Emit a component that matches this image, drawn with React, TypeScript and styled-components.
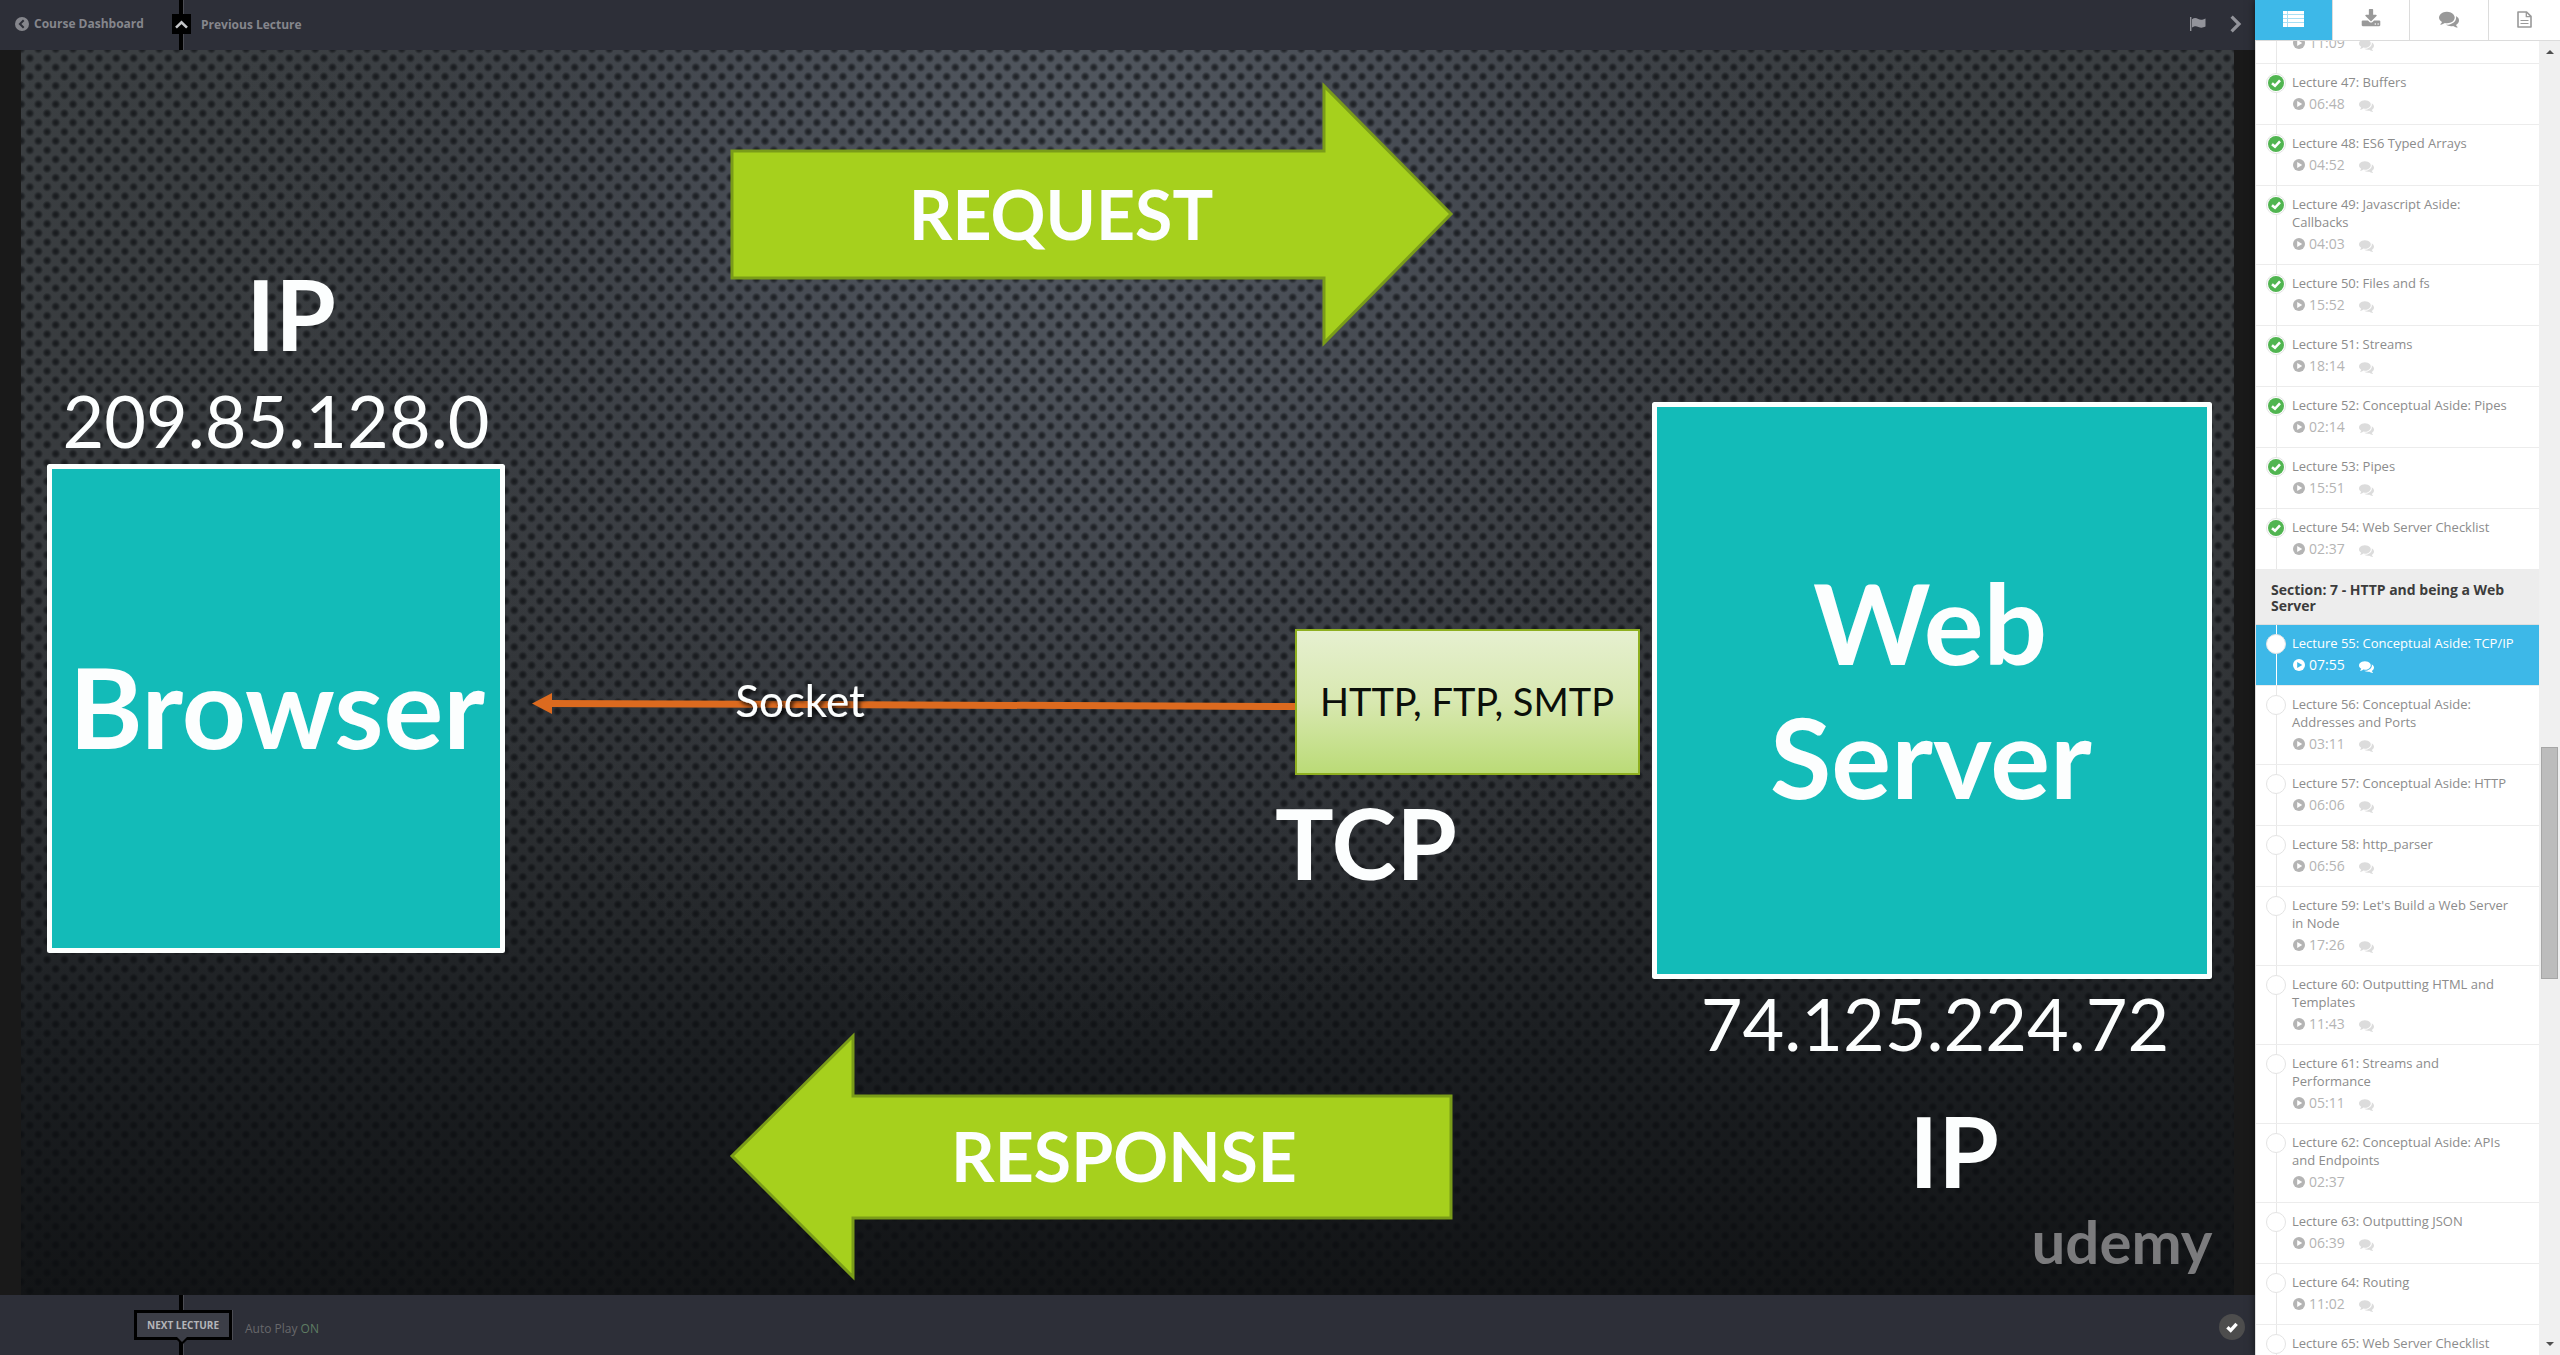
import React, { useLayoutEffect, useRef } from "react";
import styled, { createGlobalStyle, css } from "styled-components";

const GlobalStyle = createGlobalStyle`
  *, *::before, *::after { box-sizing: border-box; }
  body { margin: 0; font-family: "Open Sans", "Noto Sans", sans-serif; }
  button { font: inherit; border: 0; padding: 0; margin: 0; background: none; cursor: pointer; }
  a { text-decoration: none; color: inherit; }
  svg { display: block; }
`;

const BAR = "#2d2f38";
const BLUE = "#3db8e8";

/* ---------- page shell ---------- */

const Page = styled.div`
  display: flex;
  height: 100vh;
  overflow: hidden;
  background: #1a1a1a;
`;

const Player = styled.main`
  flex: 1;
  min-width: 0;
  display: flex;
  flex-direction: column;
`;

const TopBar = styled.header`
  flex: none;
  height: 50px;
  display: flex;
  align-items: center;
  background: ${BAR};
  color: #85868c;
  font-size: 12px;
  font-weight: 700;
  line-height: 16px;
`;

const DashboardLink = styled.a`
  display: flex;
  align-items: center;
  gap: 5px;
  width: 172px;
  padding-left: 15px;
  padding-bottom: 2px;
`;

const rail = css`
  position: relative;
  &::before {
    content: "";
    position: absolute;
    top: 0;
    bottom: 0;
    left: ${(p: { $rail: number }) => p.$rail}px;
    width: 5px;
    background: #000;
    border-right: 1px solid #4b4c53;
  }
`;

const TopRail = styled.div<{ $rail: number }>`
  ${rail}
  align-self: stretch;
  width: 19px;
  padding-top: 14px;
`;

const UpButton = styled.button`
  position: relative;
  display: grid;
  place-items: center;
  width: 19px;
  height: 20px;
  background: #000;
`;

const PreviousLink = styled.a`
  margin-left: 10px;
  flex: 1;
`;

const BarButton = styled.button`
  display: grid;
  place-items: center;
  width: 38px;
  height: 40px;
  color: #92939a;
`;

const TopActions = styled.div`
  display: flex;
  align-items: center;
  height: 100%;
  padding-bottom: 2px;
`;

const Stage = styled.section`
  flex: 1;
  min-height: 0;
  background: #191919;
  & > svg {
    width: 100%;
    height: 100%;
  }
`;

const BottomBar = styled.footer`
  flex: none;
  height: 60px;
  display: flex;
  align-items: center;
  background: ${BAR};
  padding-left: 134px;
  padding-right: 10px;
`;

const BottomRail = styled.div<{ $rail: number }>`
  ${rail}
  align-self: stretch;
  padding-top: 15px;
`;

const NextButton = styled.button`
  position: relative;
  display: block;
  width: 98px;
  height: 30px;
  border: 3px solid #000;
  background: #3c3e47;
  color: #b4b5b9;
  font-size: 10px;
  font-weight: 700;
  line-height: 24px;
  text-align: center;
  box-shadow: 1px 0 0 #4b4c53;
`;

const Notch = styled.svg`
  position: absolute;
  left: 37px;
  top: 24px;
`;

const AutoPlay = styled.button`
  flex: none;
  margin-left: 13px;
  padding-top: 8px;
  color: #68686b;
  font-size: 12px;
  line-height: 16px;
`;

const AutoPlayState = styled.span`
  color: #5e7d63;
`;

const DoneButton = styled.button`
  margin-left: auto;
  margin-top: 4px;
  display: grid;
  place-items: center;
  width: 26px;
  height: 26px;
  border-radius: 50%;
  background: #4d4d4d;
  color: #fff;
`;

/* ---------- sidebar ---------- */

const Sidebar = styled.aside`
  position: relative;
  flex: none;
  width: 305px;
  display: flex;
  flex-direction: column;
  background: #fff;
  border-left: 1px solid #dedede;
  box-shadow: 0 0 8px rgba(0, 0, 0, 0.6);
`;

const Tabs = styled.nav`
  flex: none;
  display: grid;
  grid-template-columns: 77px 77px 79px 1fr;
  height: 41px;
  margin-left: -1px;
  border-bottom: 1px solid #dcdcdc;
`;

const Tab = styled.button<{ $active?: boolean }>`
  display: grid;
  place-items: center;
  padding-bottom: 2px;
  color: ${(p) => (p.$active ? "#fff" : "#999")};
  background: ${(p) => (p.$active ? BLUE : "#fff")};
  & + & {
    border-left: 1px solid #dcdcdc;
  }
`;

const SidebarBody = styled.div`
  flex: 1;
  min-height: 0;
  display: flex;
`;

const Scroller = styled.div`
  flex: 1;
  overflow: hidden;
`;

const List = styled.ul`
  margin: 0;
  padding: 0;
  list-style: none;
`;

const SectionTitle = styled.li`
  padding: 12px 30px 10px 15px;
  background: #ededed;
  border-bottom: 1px solid #dedede;
  color: #3c3c3c;
  font-size: 14px;
  font-weight: 700;
  line-height: 16px;
`;

const Row = styled.li<{ $active?: boolean }>`
  display: grid;
  grid-template-columns: 20px 1fr;
  column-gap: 6px;
  padding: 9px 24px 10px 10px;
  border-bottom: 1px solid #ececec;
  color: ${(p) => (p.$active ? "#fff" : "#8c8c8c")};
  background: linear-gradient(${(p) => (p.$active ? "#fff, #fff" : "#e8e8e8, #e8e8e8")}) 20px 0 / 1px 100% no-repeat
    ${(p) => (p.$active ? BLUE : "#fff")};
  background-clip: ${(p) => (p.$active ? "padding-box" : "border-box")};
`;

const Marker = styled.span`
  display: grid;
  place-items: center;
  width: 20px;
  height: 20px;
  border-radius: 50%;
  border: 1px solid #e4e4e4;
  background: #fff;
`;

const RowLink = styled.a`
  display: block;
  min-width: 0;
`;

const RowTitle = styled.span`
  display: block;
  font-size: 13px;
  line-height: 18px;
`;

const Meta = styled.span<{ $active?: boolean }>`
  display: flex;
  align-items: center;
  margin-top: 3px;
  padding-left: 1px;
  color: ${(p) => (p.$active ? "#fff" : "#b4b4b4")};
  font-size: 14px;
  line-height: 20px;
`;

const Duration = styled.span`
  margin: 0 14px 0 4px;
`;

const Talk = styled.span<{ $active?: boolean }>`
  padding-top: 2px;
  color: ${(p) => (p.$active ? "#fff" : "#dcdcdc")};
`;

const ScrollTrack = styled.div`
  flex: none;
  width: 21px;
  display: grid;
  grid-template-rows: 22px 684fr 232fr 354fr 22px;
  justify-items: center;
  align-items: center;
  background: #f0f0f0;
`;

const Thumb = styled.div`
  grid-row: 3;
  width: 17px;
  height: 100%;
  background: #bcbcbc;
  border: 1px solid #a6a6a6;
`;

const ArrowBox = styled.span<{ $end?: boolean }>`
  grid-row: ${(p) => (p.$end ? 5 : 1)};
`;

/* ---------- icons ---------- */

const Svg = ({ size, d }: { size: number; d: string }) => (
  <svg width={size} height={size} viewBox="0 0 1792 1792" fill="currentColor" aria-hidden="true">
    <path d={d} />
  </svg>
);

const COMMENTS =
  "M1408 768q0 139-94 257t-256.5 186.5-353.5 68.5q-86 0-176-16-124 88-278 128-36 9-86 16h-3q-11 0-20.5-8t-11.5-21q-1-3-1-6.5t.5-6.5 2-6l2.5-5 3.5-5.5 4-5 4.5-5 4-4.5q5-6 23-25t26-29.5 22.5-29 25-38.5 20.5-44q-124-72-195-177t-71-224q0-139 94-257t256.5-186.5 353.5-68.5 353.5 68.5 256.5 186.5 94 257zm384 256q0 120-71 224.5t-195 176.5q10 24 20.5 44t25 38.5 22.5 29 26 29.5 23 25q1 1 4 4.5t4.5 5 4 5 3.5 5.5l2.5 5 2 6 .5 6.5-1 6.5q-3 14-13 22t-22 7q-50-7-86-16-154-40-278-128-90 16-176 16-271 0-472-132 58 4 88 4 161 0 309-45t264-129q125-92 192-212t67-254q0-77-23-152 129 71 204 178t75 230z";
const DOWNLOAD =
  "M1344 1344q0-26-19-45t-45-19-45 19-19 45 19 45 45 19 45-19 19-45zm256 0q0-26-19-45t-45-19-45 19-19 45 19 45 45 19 45-19 19-45zm128-224v320q0 40-28 68t-68 28h-1472q-40 0-68-28t-28-68v-320q0-40 28-68t68-28h465l135 136q58 56 136 56t136-56l136-136h464q40 0 68 28t28 68zm-325-569q17 41-14 70l-448 448q-18 19-45 19t-45-19l-448-448q-31-29-14-70 17-39 59-39h256v-448q0-26 19-45t45-19h256q26 0 45 19t19 45v448h256q42 0 59 39z";

const FileIcon = () => (
  <svg width="15" height="17" viewBox="0 0 15 17" fill="none" stroke="currentColor" strokeWidth="1.6" strokeLinejoin="round" aria-hidden="true">
    <path d="M1 1H9.600L14 5.400V16H1z" />
    <path d="M9.300 1V5.700H14" strokeWidth="1.300" />
    <path d="M3.500 9.500H11.500M3.500 12.500H11.500" strokeWidth="1.200" />
  </svg>
);

const ListIcon = () => (
  <svg width="21" height="16" viewBox="0 0 21 16" fill="currentColor" aria-hidden="true">
    <rect width="21" height="16" opacity="0.55" />
    {[0, 4, 8, 12].map((y) => (
      <g key={y}>
        <rect x="0" y={y} width="4" height={y === 12 ? 4 : 3} />
        <rect x="5" y={y} width="16" height={y === 12 ? 4 : 3} />
      </g>
    ))}
  </svg>
);

const PlayIcon = ({ hole }: { hole: string }) => (
  <svg width="12" height="12" viewBox="0 0 12 12" aria-hidden="true">
    <circle cx="6" cy="6" r="6" fill="currentColor" />
    <path d="M4.2 2.9 9.2 6 4.2 9.1z" fill={hole} />
  </svg>
);

const CheckIcon = ({ size, width }: { size: number; width: number }) => (
  <svg width={size} height={size} viewBox="0 0 16 16" fill="none" stroke="currentColor" strokeWidth={width} aria-hidden="true">
    <path d="M3.4 8.3 6.7 11.4 12.6 4.9" />
  </svg>
);

const DoneDisc = () => (
  <svg width="16" height="16" viewBox="0 0 16 16" role="img" aria-label="Completed">
    <circle cx="8" cy="8" r="8" fill="#51b551" />
    <path d="M4 8.2 7 10.8 12 5.4" fill="none" stroke="#fff" strokeWidth="2.6" />
  </svg>
);

/* ---------- video frame ---------- */

const SlideText = styled.text<{ $size: number; $weight: number }>`
  font-family: "Lato", "Open Sans", sans-serif;
  font-size: ${(p) => p.$size}px;
  font-weight: ${(p) => p.$weight};
  text-anchor: middle;
`;

const Slide = () => (
  <svg viewBox="21 50 2213 1245" role="img" aria-label="TCP/IP request and response between a browser and a web server">
    <defs>
      <linearGradient id="shade" x1="0" y1="0" x2="0" y2="1">
        <stop offset="0" stopColor="#3b3f42" />
        <stop offset="0.4" stopColor="#373a3d" />
        <stop offset="0.62" stopColor="#2b2e31" />
        <stop offset="0.8" stopColor="#1b1e21" />
        <stop offset="1" stopColor="#121416" />
      </linearGradient>
      <radialGradient id="glow" gradientUnits="userSpaceOnUse" cx="1080" cy="170" r="860">
        <stop offset="0" stopColor="#545a62" />
        <stop offset="0.4" stopColor="#4b5059" stopOpacity="0.75" />
        <stop offset="1" stopColor="#34373e" stopOpacity="0" />
      </radialGradient>
      <linearGradient id="box" x1="0" y1="0" x2="0" y2="1">
        <stop offset="0" stopColor="#e6f0d0" />
        <stop offset="0.5" stopColor="#d8e8b0" />
        <stop offset="1" stopColor="#badb76" />
      </linearGradient>
      <radialGradient id="hole">
        <stop offset="0" stopColor="#0b0d10" stopOpacity="0.75" />
        <stop offset="0.5" stopColor="#0b0d10" stopOpacity="0.55" />
        <stop offset="1" stopColor="#0b0d10" stopOpacity="0" />
      </radialGradient>
      <pattern id="mesh" patternUnits="userSpaceOnUse" x="21" y="49" width="17.3" height="18.4">
        <circle cx="8.8" cy="9.2" r="4.8" fill="url(#hole)" />
        <circle cx="0.1" cy="0" r="4.8" fill="url(#hole)" />
        <circle cx="17.4" cy="0" r="4.8" fill="url(#hole)" />
        <circle cx="0.1" cy="18.4" r="4.8" fill="url(#hole)" />
        <circle cx="17.4" cy="18.4" r="4.8" fill="url(#hole)" />
      </pattern>
      <filter id="drop" x="-10%" y="-20%" width="120%" height="150%">
        <feDropShadow dx="2" dy="3" stdDeviation="2" floodColor="#000" floodOpacity="0.9" />
      </filter>
    </defs>

    <rect x="21" y="50" width="2213" height="1245" fill="url(#shade)" />
    <rect x="21" y="50" width="2213" height="1245" fill="url(#glow)" />
    <rect x="21" y="50" width="2213" height="1245" fill="url(#mesh)" />

    <g fill="#a6d01d" stroke="#7a9c19" strokeWidth="3">
      <path d="M732 151H1324V86L1451 214 1324 343V278H732z" />
      <path d="M1451 1096H853V1036L732 1156 853 1277V1218H1451z" />
    </g>

    <g fill="#13bbb8" stroke="#fcfffe" strokeWidth="5" strokeLinejoin="round">
      <rect x="49.5" y="466.5" width="453" height="484" />
      <rect x="1654.5" y="404.5" width="555" height="572" />
    </g>

    <path d="M550 700 1296 703V710L550 707z" fill="#dc6a1f" />
    <path d="M532 703.5 552 693V714z" fill="#dc6a1f" />
    <rect x="1296" y="630" width="343" height="144" fill="url(#box)" stroke="#8fb020" strokeWidth="2" />

    <g fill="#fcfefe">
      <SlideText x="291" y="351" $size={98} $weight={700}>IP</SlideText>
      <SlideText x="276" y="448" $size={72} $weight={400}>209.85.128.0</SlideText>
      <SlideText x="277" y="749" $size={112} $weight={700}>Browser</SlideText>
      <SlideText x="1061" y="240" $size={68} $weight={700}>REQUEST</SlideText>
      <SlideText x="1124" y="1182" $size={68} $weight={700}>RESPONSE</SlideText>
      <SlideText x="1366" y="880" $size={98} $weight={700}>TCP</SlideText>
      <SlideText x="1930" y="665" $size={112} $weight={700}>Web</SlideText>
      <SlideText x="1931" y="799" $size={112} $weight={700}>Server</SlideText>
      <SlideText x="1935" y="1051" $size={72} $weight={400}>74.125.224.72</SlideText>
      <SlideText x="1954" y="1188" $size={98} $weight={700}>IP</SlideText>
      <SlideText x="800" y="717" $size={44} $weight={400} filter="url(#drop)">Socket</SlideText>
    </g>
    <SlideText x="1467" y="716" $size={38} $weight={400} fill="#0b0f0a">HTTP, FTP, SMTP</SlideText>
    <SlideText x="2122" y="1264" $size={60} $weight={700} fill="#7b7b7d">udemy</SlideText>
  </svg>
);

/* ---------- data ---------- */

type Lecture = { n: number; title: string; time: string; done?: boolean; active?: boolean; quiet?: boolean };

const before: Lecture[] = [
  { n: 46, title: "", time: "11:09", done: true },
  { n: 47, title: "Buffers", time: "06:48", done: true },
  { n: 48, title: "ES6 Typed Arrays", time: "04:52", done: true },
  { n: 49, title: "Javascript Aside: Callbacks", time: "04:03", done: true },
  { n: 50, title: "Files and fs", time: "15:52", done: true },
  { n: 51, title: "Streams", time: "18:14", done: true },
  { n: 52, title: "Conceptual Aside: Pipes", time: "02:14", done: true },
  { n: 53, title: "Pipes", time: "15:51", done: true },
  { n: 54, title: "Web Server Checklist", time: "02:37", done: true },
];

const after: Lecture[] = [
  { n: 55, title: "Conceptual Aside: TCP/IP", time: "07:55", active: true },
  { n: 56, title: "Conceptual Aside: Addresses and Ports", time: "03:11" },
  { n: 57, title: "Conceptual Aside: HTTP", time: "06:06" },
  { n: 58, title: "http_parser", time: "06:56" },
  { n: 59, title: "Let's Build a Web Server in Node", time: "17:26" },
  { n: 60, title: "Outputting HTML and Templates", time: "11:43" },
  { n: 61, title: "Streams and Performance", time: "05:11" },
  { n: 62, title: "Conceptual Aside: APIs and Endpoints", time: "02:37", quiet: true },
  { n: 63, title: "Outputting JSON", time: "06:39" },
  { n: 64, title: "Routing", time: "11:02" },
  { n: 65, title: "Web Server Checklist", time: "01:20" },
];

const LectureRow = ({ lecture: l }: { lecture: Lecture }) => (
  <Row $active={l.active}>
    <Marker>{l.done && <DoneDisc />}</Marker>
    <RowLink href="#">
      <RowTitle>{`Lecture ${l.n}: ${l.title}`}</RowTitle>
      <Meta $active={l.active}>
        <PlayIcon hole={l.active ? BLUE : "#fff"} />
        <Duration>{l.time}</Duration>
        {!l.quiet && (
          <Talk $active={l.active}>
            <Svg size={15} d={COMMENTS} />
          </Talk>
        )}
      </Meta>
    </RowLink>
  </Row>
);

export default function App() {
  const scroller = useRef<HTMLDivElement>(null);

  useLayoutEffect(() => {
    if (scroller.current) scroller.current.scrollTop = 38;
  }, []);

  return (
    <>
      <GlobalStyle />
      <Page>
        <Player>
          <TopBar>
            <DashboardLink href="#">
              <svg width="14" height="14" viewBox="0 0 14 14" aria-hidden="true">
                <circle cx="7" cy="7" r="7" fill="#85868c" />
                <path d="M8.7 3.2 4.9 7l3.8 3.8" fill="none" stroke={BAR} strokeWidth="2" />
              </svg>
              Course Dashboard
            </DashboardLink>
            <TopRail $rail={7}>
              <UpButton aria-label="Go up">
                <svg width="13" height="9" viewBox="0 0 13 9" fill="none" stroke="#c4c5c8" strokeWidth="2.6" aria-hidden="true">
                  <path d="M1 7.6 6.5 2.2 12 7.6" />
                </svg>
              </UpButton>
            </TopRail>
            <PreviousLink href="#">Previous Lecture</PreviousLink>
            <TopActions>
              <BarButton aria-label="Report">
                <svg width="16" height="14" viewBox="0 0 16 14" fill="currentColor" aria-hidden="true">
                  <rect x="0" y="0" width="1.4" height="14" />
                  <path d="M2 2.2C4 .8 6 .8 8.2 2S12.500 3 15.500 1.400V9.600C12.500 11 10.800 11 8.400 9.900S4.500 9 2 10.600z" />
                </svg>
              </BarButton>
              <BarButton aria-label="Collapse sidebar">
                <svg width="12" height="18" viewBox="0 0 12 18" fill="none" stroke="currentColor" strokeWidth="3.200" aria-hidden="true">
                  <path d="M1.600 1.600 9 9l-7.400 7.400" />
                </svg>
              </BarButton>
            </TopActions>
          </TopBar>

          <Stage>
            <Slide />
          </Stage>

          <BottomBar>
            <BottomRail $rail={45}>
              <NextButton>
                NEXT LECTURE
                <Notch width="16" height="9" viewBox="0 0 16 9" aria-hidden="true">
                  <path d="M0 0 8 8 16 0z" fill="#000" />
                  <path d="M3 0 8 5 13 0z" fill="#3c3e47" />
                </Notch>
              </NextButton>
            </BottomRail>
            <AutoPlay>
              Auto Play <AutoPlayState>ON</AutoPlayState>
            </AutoPlay>
            <DoneButton aria-label="Mark as completed">
              <CheckIcon size={16} width={3.4} />
            </DoneButton>
          </BottomBar>
        </Player>

        <Sidebar>
          <Tabs>
            <Tab $active aria-label="Lectures">
              <ListIcon />
            </Tab>
            <Tab aria-label="Downloads">
              <Svg size={20} d={DOWNLOAD} />
            </Tab>
            <Tab aria-label="Discussions">
              <Svg size={20} d={COMMENTS} />
            </Tab>
            <Tab aria-label="Notes">
              <FileIcon />
            </Tab>
          </Tabs>
          <SidebarBody>
            <Scroller ref={scroller}>
              <List>
                {before.map((l) => (
                  <LectureRow key={l.n} lecture={l} />
                ))}
                <SectionTitle>Section: 7 - HTTP and being a Web Server</SectionTitle>
                {after.map((l) => (
                  <LectureRow key={l.n} lecture={l} />
                ))}
              </List>
            </Scroller>
            <ScrollTrack>
              <ArrowBox>
                <svg width="8" height="4" viewBox="0 0 8 4" aria-hidden="true">
                  <path d="M0 4 4 0 8 4z" fill="#505050" />
                </svg>
              </ArrowBox>
              <Thumb />
              <ArrowBox $end>
                <svg width="8" height="4" viewBox="0 0 8 4" aria-hidden="true">
                  <path d="M0 0 4 4 8 0z" fill="#505050" />
                </svg>
              </ArrowBox>
            </ScrollTrack>
          </SidebarBody>
        </Sidebar>
      </Page>
    </>
  );
}
